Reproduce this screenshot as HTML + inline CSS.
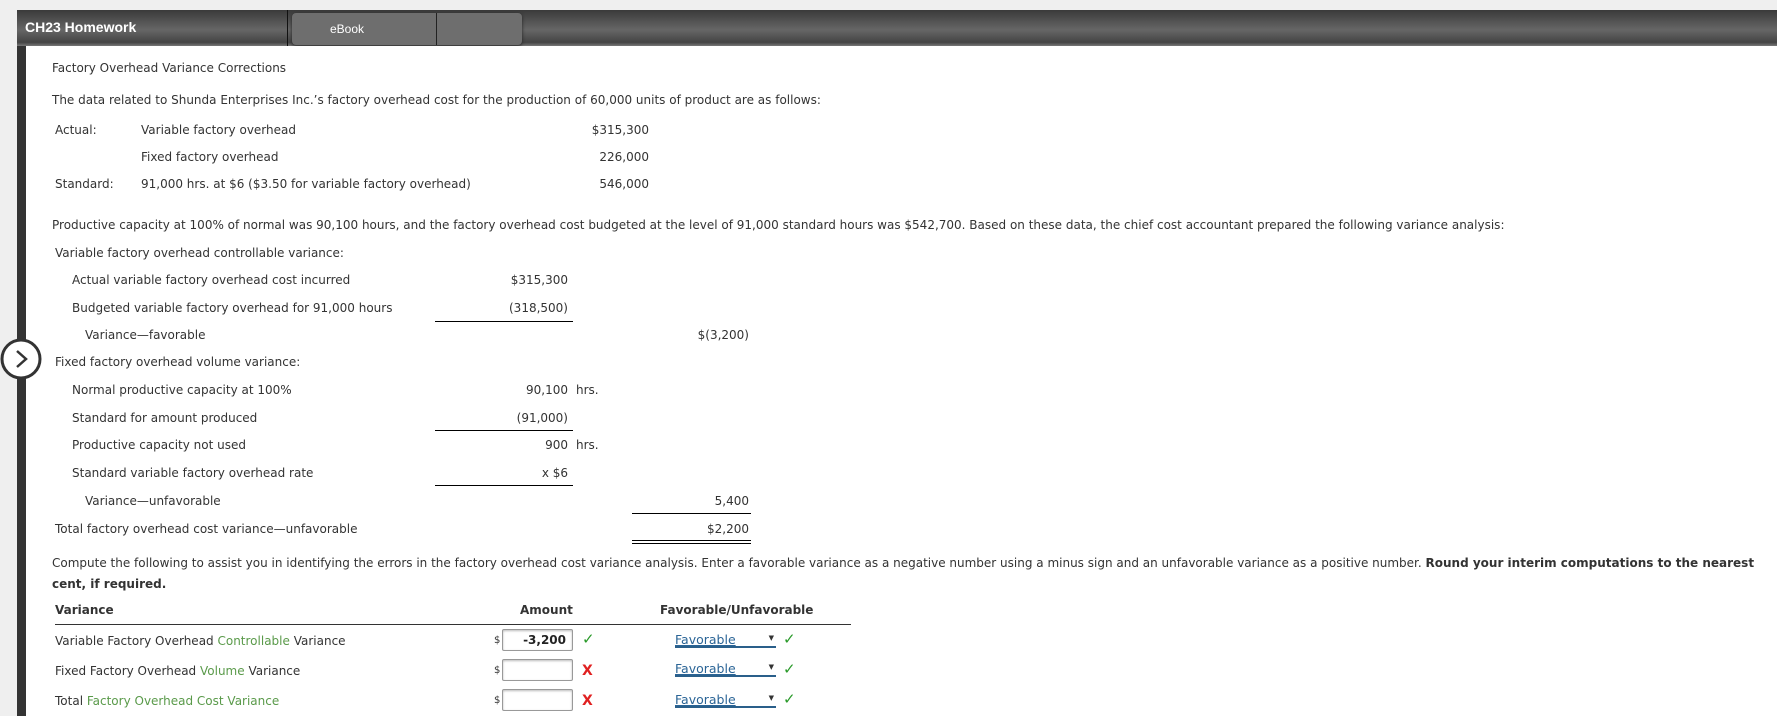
<!DOCTYPE html>
<html><head><meta charset="utf-8"><style>
*{margin:0;padding:0;box-sizing:border-box}
body{width:1777px;height:716px;overflow:hidden;background:#efefef;font-family:"DejaVu Sans","Liberation Sans",sans-serif;font-size:12px;color:#333;position:relative}
#hdr{position:absolute;left:17px;top:10px;width:1760px;height:36px;background:linear-gradient(#3a3a3a,#666 55%,#444 90%,#777);}
#hdr .t{position:absolute;left:8px;top:9px;color:#fff;font-weight:bold;font-size:14px;font-family:"Liberation Sans",sans-serif}
#tab{position:absolute;left:275px;top:3px;width:230px;height:32px;background:#6e6e6e;border-radius:4px;box-shadow:0 1px 3px #222}
#tab span{position:absolute;left:38px;top:9px;color:#fff;font-size:12px;font-family:"Liberation Sans",sans-serif}
#tab i{position:absolute;left:144px;top:0;width:1px;height:32px;background:#222}
#hdr .d{position:absolute;left:270px;top:0;width:1px;height:36px;background:#111}
#main{position:absolute;left:17px;top:46px;width:1760px;height:670px;background:#fff;border-left:9px solid #333}
.a{position:absolute;white-space:nowrap;line-height:14px}
.r{text-align:right}
.ln{position:absolute;height:1px;background:#000}
.g{color:#5a9a4a}
.ck{color:#2a9a2a;font-size:15px;font-weight:bold}
.x{color:#e02020;font-weight:bold;font-size:14px}
.in{position:absolute;width:71px;height:22px;border:1px solid #999;border-radius:2px;box-shadow:inset 0 1px 2px #bbb;background:#fff;text-align:right;padding:3px 6px;font-size:12px;color:#222;font-weight:bold}
.sel{position:absolute;width:101px;height:16px;border-bottom:2px solid #2a5f8a;color:#2a6496;font-size:12.5px;text-decoration:underline}
.sel b{position:absolute;right:2px;top:2px;font-size:7px;color:#333;font-weight:normal;text-decoration:none}
</style></head><body>
<div id="hdr"><div class="t">CH23 Homework</div><div class="d"></div><div id="tab"><span>eBook</span><i></i></div></div>
<div id="main"></div>
<svg style="position:absolute;left:0;top:338px" width="44" height="44"><circle cx="21" cy="21" r="19" fill="#fff" stroke="#333" stroke-width="3"/><path d="M17 13 L26 21 L17 29" fill="none" stroke="#333" stroke-width="2.5"/></svg>
<div class="a" style="left:52px;top:61px">Factory Overhead Variance Corrections</div>
<div class="a" style="left:52px;top:93px">The data related to Shunda Enterprises Inc.’s factory overhead cost for the production of 60,000 units of product are as follows:</div>
<div class="a" style="left:55px;top:123px">Actual:</div><div class="a" style="left:141px;top:123px">Variable factory overhead</div><div class="a r" style="left:549px;width:100px;top:123px">$315,300</div>
<div class="a" style="left:141px;top:150px">Fixed factory overhead</div><div class="a r" style="left:549px;width:100px;top:150px">226,000</div>
<div class="a" style="left:55px;top:177px">Standard:</div><div class="a" style="left:141px;top:177px">91,000 hrs. at $6 ($3.50 for variable factory overhead)</div><div class="a r" style="left:549px;width:100px;top:177px">546,000</div>
<div class="a" style="left:52px;top:218px">Productive capacity at 100% of normal was 90,100 hours, and the factory overhead cost budgeted at the level of 91,000 standard hours was $542,700. Based on these data, the chief cost accountant prepared the following variance analysis:</div>
<div class="a" style="left:55px;top:246px">Variable factory overhead controllable variance:</div>
<div class="a" style="left:72px;top:273px">Actual variable factory overhead cost incurred</div><div class="a r" style="left:468px;width:100px;top:273px">$315,300</div>
<div class="a" style="left:72px;top:301px">Budgeted variable factory overhead for 91,000 hours</div><div class="a r" style="left:468px;width:100px;top:301px">(318,500)</div>
<div class="ln" style="left:435px;width:138px;top:321px"></div>
<div class="a" style="left:85px;top:328px">Variance—favorable</div><div class="a r" style="left:649px;width:100px;top:328px">$(3,200)</div>
<div class="a" style="left:55px;top:355px">Fixed factory overhead volume variance:</div>
<div class="a" style="left:72px;top:383px">Normal productive capacity at 100%</div><div class="a r" style="left:468px;width:100px;top:383px">90,100</div><div class="a" style="left:576px;top:383px">hrs.</div>
<div class="a" style="left:72px;top:411px">Standard for amount produced</div><div class="a r" style="left:468px;width:100px;top:411px">(91,000)</div>
<div class="ln" style="left:435px;width:138px;top:430px"></div>
<div class="a" style="left:72px;top:438px">Productive capacity not used</div><div class="a r" style="left:468px;width:100px;top:438px">900</div><div class="a" style="left:576px;top:438px">hrs.</div>
<div class="a" style="left:72px;top:466px">Standard variable factory overhead rate</div><div class="a r" style="left:468px;width:100px;top:466px">x $6</div>
<div class="ln" style="left:435px;width:138px;top:485px"></div>
<div class="a" style="left:85px;top:494px">Variance—unfavorable</div><div class="a r" style="left:649px;width:100px;top:494px">5,400</div>
<div class="ln" style="left:632px;width:119px;top:513px"></div>
<div class="a" style="left:55px;top:522px">Total factory overhead cost variance—unfavorable</div><div class="a r" style="left:649px;width:100px;top:522px">$2,200</div>
<div class="ln" style="left:632px;width:119px;top:540px"></div><div class="ln" style="left:632px;width:119px;top:543px"></div>
<div class="a" style="left:52px;top:553px;white-space:normal;width:1710px;line-height:21px">Compute the following to assist you in identifying the errors in the factory overhead cost variance analysis. Enter a favorable variance as a negative number using a minus sign and an unfavorable variance as a positive number. <b>Round your interim computations to the nearest cent, if required.</b></div>
<div class="a" style="left:55px;top:603px;font-weight:bold">Variance</div><div class="a" style="left:520px;top:603px;font-weight:bold">Amount</div><div class="a" style="left:660px;top:603px;font-weight:bold">Favorable/Unfavorable</div>
<div class="ln" style="left:55px;width:796px;top:624px;background:#333"></div>
<div class="a" style="left:55px;top:634px">Variable Factory Overhead <span class="g">Controllable</span> Variance</div>
<div class="a" style="left:55px;top:664px">Fixed Factory Overhead <span class="g">Volume</span> Variance</div>
<div class="a" style="left:55px;top:694px">Total <span class="g">Factory Overhead Cost Variance</span></div>
<div class="a" style="left:494px;top:634px;font-size:10px">$</div><div class="in" style="left:502px;top:629px">-3,200</div><div class="a ck" style="left:582px;top:632px">✓</div>
<div class="a" style="left:494px;top:664px;font-size:10px">$</div><div class="in" style="left:502px;top:659px"></div><div class="a x" style="left:582px;top:664px">X</div>
<div class="a" style="left:494px;top:694px;font-size:10px">$</div><div class="in" style="left:502px;top:689px"></div><div class="a x" style="left:582px;top:694px">X</div>
<div class="sel" style="left:675px;top:632px">Favorable<b>▼</b></div><div class="a ck" style="left:783px;top:632px">✓</div>
<div class="sel" style="left:675px;top:661px">Favorable<b>▼</b></div><div class="a ck" style="left:783px;top:662px">✓</div>
<div class="sel" style="left:675px;top:692px">Favorable<b>▼</b></div><div class="a ck" style="left:783px;top:692px">✓</div>
</body></html>
